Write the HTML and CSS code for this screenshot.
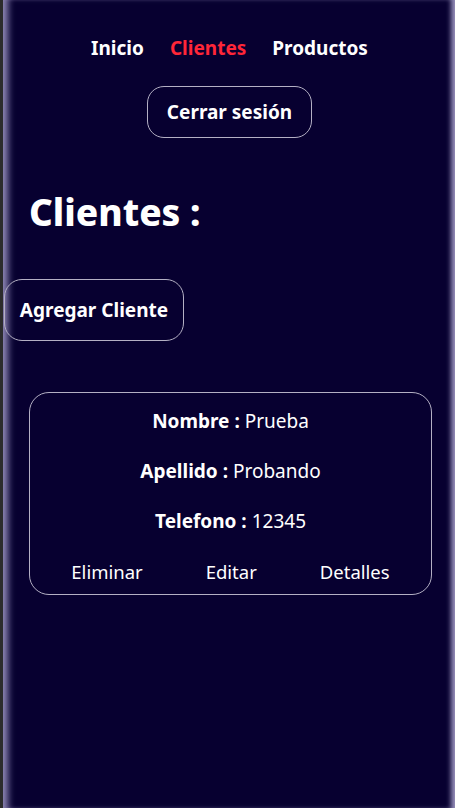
FILE: index.html
```html
<!DOCTYPE html>
<html lang="es">
<head>
  <meta charset="UTF-8">
  <meta name="viewport" content="width=device-width, initial-scale=1.0">
  <title>Clientes</title>
  <link rel="stylesheet" href="styles.css">
</head>
<body>
  <div class="screen">
    <header class="header">
      <nav class="nav">
        <a href="#" class="nav-link">Inicio</a>
        <a href="#" class="nav-link active">Clientes</a>
        <a href="#" class="nav-link">Productos</a>
      </nav>
      <button class="btn btn-logout">Cerrar sesión</button>
    </header>

    <h1 class="title">Clientes :</h1>

    <button class="btn btn-add">Agregar Cliente</button>

    <div class="card">
      <p class="row"><b>Nombre :</b> Prueba</p>
      <p class="row"><b>Apellido :</b> Probando</p>
      <p class="row"><b>Telefono :</b> 12345</p>
      <div class="actions">
        <button class="link-btn">Eliminar</button>
        <button class="link-btn">Editar</button>
        <button class="link-btn">Detalles</button>
      </div>
    </div>
  </div>
</body>
</html>
```

FILE: styles.css
```css
html, body {
  margin: 0;
  padding: 0;
  background-color: #070030;
}

body {
  font-family: "Noto Sans", "Open Sans", sans-serif;
  color: #fff;
}

.screen {
  min-height: 808px;
  box-sizing: border-box;
  border-left: 3px solid #2c2c2c;
  padding-left: 1px;
  box-shadow: inset 9px 0 7px -4px #8e86b4, inset -7px 0 5px -3px #9890bc;
}

.header {
  display: flex;
  flex-direction: column;
  align-items: center;
  padding-top: 36px;
}

.nav {
  display: flex;
  gap: 26px;
}

.nav-link {
  font-size: 19px;
  line-height: 24px;
  font-weight: bold;
  color: #fff;
  text-decoration: none;
}

.nav-link.active {
  color: #ff2638;
}

.btn {
  font-family: inherit;
  font-weight: bold;
  color: #fff;
  background: transparent;
  border: 1px solid #b4b0c4;
  cursor: pointer;
}

.btn-logout {
  margin-top: 26px;
  width: 165px;
  height: 52px;
  border-radius: 17px;
  font-size: 19px;
}

.title {
  margin: 52px 0 0 25px;
  font-size: 37px;
  font-weight: 800;
  line-height: 44px;
}

.btn-add {
  display: block;
  margin-top: 45px;
  width: 180px;
  height: 62px;
  border-radius: 18px;
  font-size: 19px;
}

.card {
  margin: 51px 23px 0 25px;
  padding: 3px 0 8px;
  border: 1px solid #b4b0c4;
  border-radius: 20px;
  text-align: center;
}

.row {
  margin: 0;
  font-size: 19px;
  line-height: 50px;
}

.actions {
  display: flex;
  justify-content: center;
  gap: 63px;
  margin-top: 12px;
}

.link-btn {
  font-family: inherit;
  font-size: 18.5px;
  line-height: 28px;
  color: #fff;
  background: transparent;
  border: none;
  padding: 0;
  cursor: pointer;
}
```
